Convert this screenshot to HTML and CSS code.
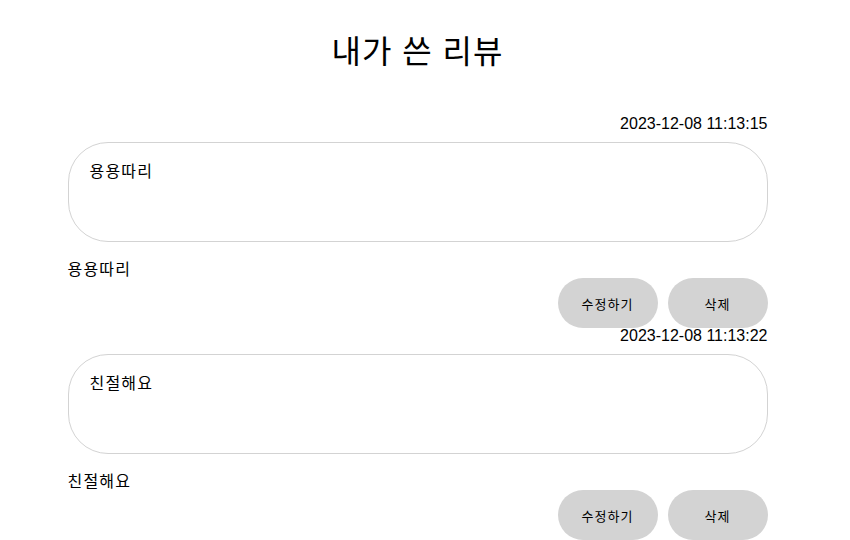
FILE: index.html
```html
<!DOCTYPE html>
<html lang="ko">
<head>
<meta charset="utf-8">
<title>내가 쓴 리뷰</title>
<link rel="stylesheet" href="styles.css">
</head>
<body>
<div class="page">
  <main class="container">
    <h1 class="title">내가 쓴 리뷰</h1>
    <section class="review">
      <div class="date">2023-12-08 11:13:15</div>
      <div class="box">용용따리</div>
      <div class="text">용용따리</div>
      <div class="actions">
        <button class="btn">수정하기</button>
        <button class="btn">삭제</button>
      </div>
    </section>
    <section class="review">
      <div class="date">2023-12-08 11:13:22</div>
      <div class="box">친절해요</div>
      <div class="text">친절해요</div>
      <div class="actions">
        <button class="btn">수정하기</button>
        <button class="btn">삭제</button>
      </div>
    </section>
  </main>
</div>
</body>
</html>
```
FILE: styles.css
```css
html, body {
  margin: 0;
  padding: 0;
  background: #fff;
}
body {
  padding: 8px;
  font-family: "Liberation Sans", "Noto Sans CJK KR", sans-serif;
  color: #000;
  font-size: 16px;
}
.page {
  padding-right: 15px;
}
.container {
  width: 700px;
  margin: 0 auto;
}
.title {
  margin: 24px 0 44px;
  font-size: 32px;
  font-weight: 400;
  line-height: 40px;
  letter-spacing: 1px;
  text-align: center;
}
.date {
  text-align: right;
  line-height: 16px;
}
.box {
  margin-top: 10px;
  height: 100px;
  box-sizing: border-box;
  border: 1px solid #d3d3d3;
  border-radius: 40px;
  padding: 20px 21px;
  line-height: 18px;
  letter-spacing: 1.2px;
}
.text {
  margin-top: 20px;
  line-height: 16px;
  letter-spacing: 1.2px;
}
.actions {
  display: flex;
  justify-content: flex-end;
  gap: 10px;
}
.btn {
  width: 100px;
  height: 50px;
  border: none;
  border-radius: 25px;
  background: #d3d3d3;
  font-family: "Liberation Sans", "Noto Sans CJK KR", sans-serif;
  font-size: 13px;
  letter-spacing: 1px;
  color: #000;
  padding: 0;
}
```
